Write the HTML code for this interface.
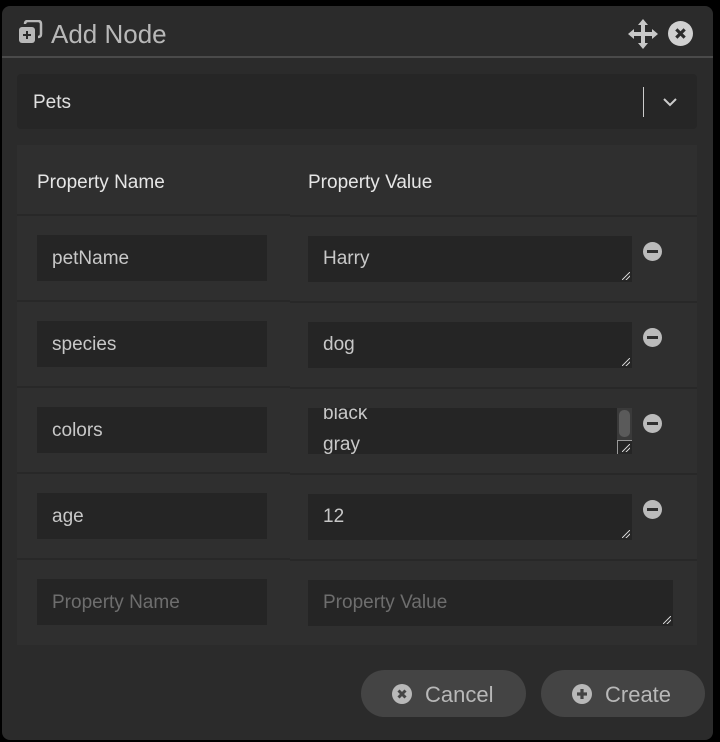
<!DOCTYPE html>
<html><head><meta charset="utf-8"><style>
*{box-sizing:border-box;margin:0;padding:0}
body{width:720px;height:742px;background:#000;font-family:"Liberation Sans",sans-serif;overflow:hidden;position:relative}
.panel{position:absolute;left:2px;top:6px;width:711px;height:734px;background:#2b2b2b;border-radius:8px}
.title{position:absolute;left:0;top:0;width:711px;height:52px;border-bottom:2px solid #4a4a4a}
.title span{position:absolute;left:49px;top:13px;font-size:26px;color:#b8b8b8}
.abs{position:absolute}
.sel{left:15px;top:68px;width:680px;height:55px;background:#262626;border-radius:4px}
.sel span{position:absolute;left:16px;top:18px;font-size:19px;color:#e0e0e0}
.sel .bar{position:absolute;left:626px;top:13px;width:1px;height:30px;background:#ccc}
.tbl{left:15px;top:139px;width:680px;height:500px;background:#2f2f2f}
.hdr{position:absolute;top:27px;font-size:19px;color:#e6e6e6}
.line{position:absolute;height:2px;background:#282828}
.inp{position:absolute;background:#252525;font-size:19px;color:#c8c8c8;padding-left:15px;line-height:48px;overflow:hidden}
.ph{color:#6e6e6e}
.rs{position:absolute;right:2px;bottom:2px;width:8px;height:8px;background:linear-gradient(135deg,transparent 45%,#ccc 45%,#ccc 55%,transparent 55%,transparent 70%,#ccc 70%,#ccc 80%,transparent 80%)}
.minus{position:absolute;left:626px;width:19px;height:19px;border-radius:50%;background:#bbb}
.minus:after{content:"";position:absolute;left:4px;top:8px;width:11px;height:3px;background:#2f2f2f}
.btn{position:absolute;top:664px;height:47px;border-radius:24px;background:#444;color:#b8b8b8;font-size:22px}
.btn span{position:absolute;top:12px}
.btn svg{position:absolute;top:14px}
</style></head><body>
<div class="panel">
 <div class="title">
  <svg class="abs" style="left:16px;top:14px" width="26" height="26" viewBox="0 0 26 26">
   <path d="M7 4 Q7 1 10 1 H20 Q23 1 23 4 V14 Q23 17 20 17" fill="none" stroke="#b8b8b8" stroke-width="2.5"/>
   <rect x="1" y="7" width="16" height="16" rx="3" fill="#b8b8b8"/>
   <path d="M9 11 V19 M5 15 H13" stroke="#2b2b2b" stroke-width="2"/>
  </svg>
  <span>Add Node</span>
  <svg class="abs" style="left:625px;top:12px" width="32" height="32" viewBox="0 0 32 32" fill="#c8c8c8">
   <path d="M16 1 L21 7 H18 V14 H25 V11 L31 16 L25 21 V18 H18 V25 H21 L16 31 L11 25 H14 V18 H7 V21 L1 16 L7 11 V14 H14 V7 H11 Z"/>
  </svg>
  <svg class="abs" style="left:666px;top:15px" width="25" height="25" viewBox="0 0 24 24">
   <circle cx="12" cy="12" r="12" fill="#d0d0d0"/>
   <path d="M8 8 L16 16 M16 8 L8 16" stroke="#2b2b2b" stroke-width="3"/>
  </svg>
 </div>
 <div class="abs sel"><span>Pets</span><div class="bar"></div>
  <svg class="abs" style="left:645px;top:22px" width="16" height="12" viewBox="0 0 16 12"><path d="M2 3 L8 9 L14 3" fill="none" stroke="#ccc" stroke-width="2"/></svg>
 </div>
 <div class="abs tbl">
  <div class="hdr" style="left:20px">Property Name</div>
  <div class="hdr" style="left:291px">Property Value</div>
  <div class="line" style="left:0;width:273px;top:69px"></div><div class="line" style="left:273px;width:407px;top:70px"></div>
  <div class="line" style="left:0;width:273px;top:155px"></div><div class="line" style="left:273px;width:407px;top:156px"></div>
  <div class="line" style="left:0;width:273px;top:241px"></div><div class="line" style="left:273px;width:407px;top:242px"></div>
  <div class="line" style="left:0;width:273px;top:327px"></div><div class="line" style="left:273px;width:407px;top:328px"></div>
  <div class="line" style="left:0;width:273px;top:413px"></div><div class="line" style="left:273px;width:407px;top:414px"></div>

  <div class="inp" style="left:20px;top:90px;width:230px;height:46px">petName</div>
  <div class="inp" style="left:291px;top:91px;width:324px;height:46px;line-height:46px">Harry<div class="rs"></div></div>
  <div class="minus" style="top:97px"></div>

  <div class="inp" style="left:20px;top:176px;width:230px;height:46px">species</div>
  <div class="inp" style="left:291px;top:177px;width:324px;height:46px;line-height:46px">dog<div class="rs"></div></div>
  <div class="minus" style="top:183px"></div>

  <div class="inp" style="left:20px;top:262px;width:230px;height:46px">colors</div>
  <div class="inp" style="left:291px;top:263px;width:324px;height:46px;line-height:31px"><div style="margin-top:-10px">black<br>gray</div>
   <div class="abs" style="right:0;top:0;width:15px;height:32px;background:#3a3a3a"><div style="margin:2px;height:27px;background:#5a5a5a;border-radius:5px"></div></div>
   <div class="abs" style="right:0;top:32px;width:15px;height:14px;border-left:1px solid #999;border-top:1px solid #999"></div><div class="rs"></div></div>
  <div class="minus" style="top:269px"></div>

  <div class="inp" style="left:20px;top:348px;width:230px;height:46px">age</div>
  <div class="inp" style="left:291px;top:349px;width:324px;height:46px;line-height:46px">12<div class="rs"></div></div>
  <div class="minus" style="top:355px"></div>

  <div class="inp ph" style="left:20px;top:434px;width:230px;height:46px">Property Name</div>
  <div class="inp ph" style="left:291px;top:435px;width:365px;height:46px;line-height:46px">Property Value<div class="rs"></div></div>
 </div>
 <div class="btn" style="left:359px;width:165px">
  <svg style="left:31px" width="20" height="20" viewBox="0 0 20 20"><circle cx="10" cy="10" r="10" fill="#b8b8b8"/><path d="M6.5 6.5 L13.5 13.5 M13.5 6.5 L6.5 13.5" stroke="#444" stroke-width="3"/></svg>
  <span style="left:64px">Cancel</span></div>
 <div class="btn" style="left:539px;width:164px">
  <svg style="left:31px" width="20" height="20" viewBox="0 0 20 20"><circle cx="10" cy="10" r="10" fill="#b8b8b8"/><path d="M10 5 V15 M5 10 H15" stroke="#444" stroke-width="3.2"/></svg>
  <span style="left:64px">Create</span></div>
</div>
</body></html>
